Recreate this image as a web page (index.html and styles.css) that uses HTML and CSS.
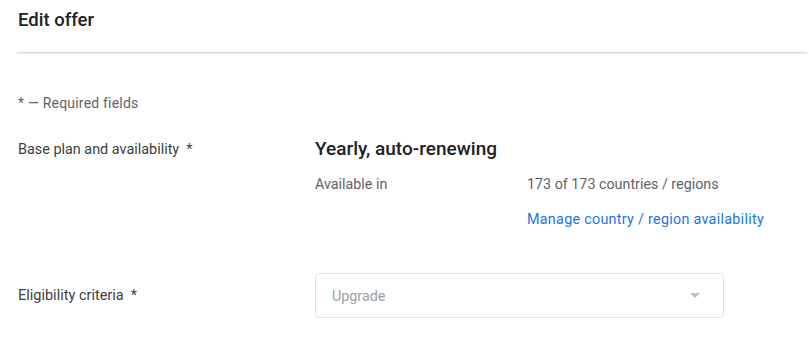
FILE: index.html
```html
<!DOCTYPE html>
<html lang="en">
<head>
    <meta charset="UTF-8">
    <meta name="viewport" content="width=device-width, initial-scale=1.0">
    <title>Edit offer</title>
    <link rel="stylesheet" href="styles.css">
</head>
<body>
    <div class="topbar">
        <h1 class="title">Edit offer</h1>
    </div>

    <div class="form">
        <p class="required-note">* — Required fields</p>

        <div class="row">
            <div class="label">Base plan and availability&nbsp; *</div>
            <div class="field">
                <div class="plan-name">Yearly, auto-renewing</div>
                <div class="avail">
                    <span class="avail-key">Available in</span>
                    <div class="avail-val">
                        <span>173 of 173 countries / regions</span>
                        <a class="link" href="#">Manage country / region availability</a>
                    </div>
                </div>
            </div>
        </div>

        <div class="row row-select">
            <div class="label">Eligibility criteria&nbsp; *</div>
            <div class="field">
                <div class="select">
                    <span>Upgrade</span>
                    <span class="caret"></span>
                </div>
            </div>
        </div>
    </div>
</body>
</html>
```

FILE: styles.css
```css
body {
    margin: 0;
    background: #fff;
    font-family: Roboto, "Noto Sans", sans-serif;
    color: #3c4043;
    overflow: hidden;
}
.topbar {
    margin-left: 15px;
    height: 52px;
    background: #fff;
    box-shadow: 0 3px 2px -2px rgba(60, 64, 67, 0.3);
}
.title {
    margin: 0;
    padding: 9px 0 0 3px;
    font-size: 18.5px;
    font-weight: 500;
    color: #202124;
    line-height: 22px;
}
.form {
    padding: 0 18px;
}
.required-note {
    margin: 42px 0 0;
    font-size: 14px;
    letter-spacing: 0.2px;
    line-height: 18px;
    color: #5f6368;
}
.row {
    display: flex;
    margin-top: 24px;
}
.label {
    width: 297px;
    font-size: 14.4px;
    line-height: 20px;
    color: #3c4043;
    padding-top: 4px;
}
.field {
    flex: 1;
}
.plan-name {
    font-size: 19px;
    font-weight: 500;
    line-height: 26px;
    color: #202124;
}
.avail {
    display: flex;
    margin-top: 12px;
    font-size: 14.3px;
    line-height: 20px;
    color: #5f6368;
}
.avail-key {
    width: 212px;
}
.avail-val {
    display: flex;
    flex-direction: column;
    gap: 15px;
}
.link {
    color: #1a73e8;
    letter-spacing: 0.3px;
    text-decoration: none;
}
.row-select {
    margin-top: 44px;
    align-items: center;
}
.row-select .label {
    padding-top: 0;
    font-size: 14.5px;
}
.select {
    width: 409px;
    height: 45px;
    box-sizing: border-box;
    border: 1px solid #e3e3e3;
    border-radius: 4px;
    display: flex;
    align-items: center;
    justify-content: space-between;
    padding: 0 23px 0 16px;
    font-size: 14.3px;
    color: #9aa0a6;
}
.caret {
    width: 0;
    height: 0;
    border-left: 5px solid transparent;
    border-right: 5px solid transparent;
    border-top: 5px solid #bdc1c6;
}
```
